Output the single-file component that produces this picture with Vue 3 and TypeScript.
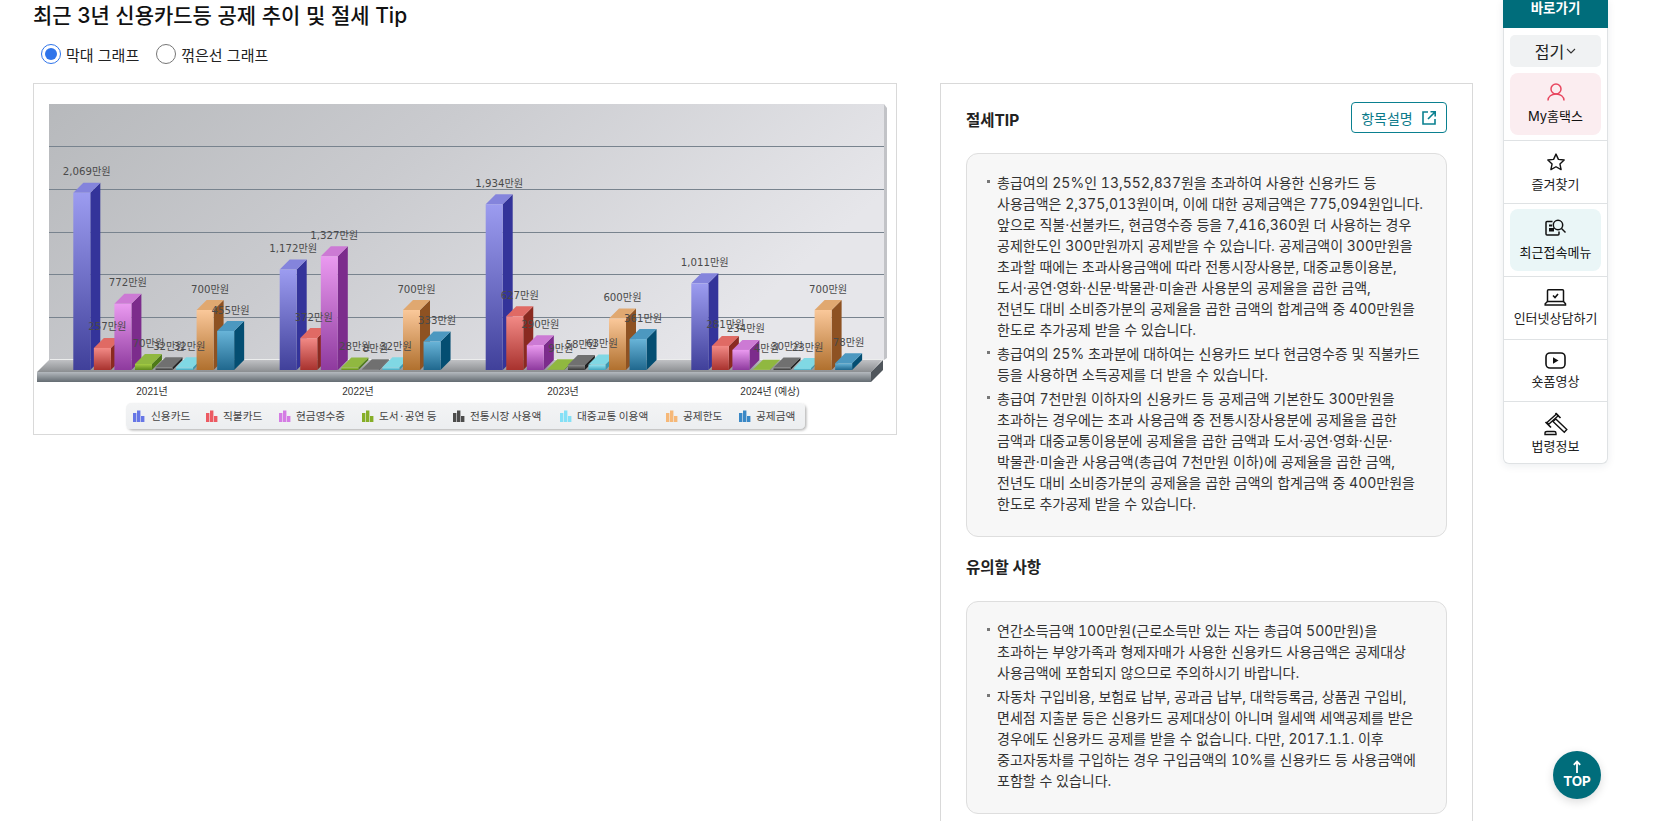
<script setup lang="ts">
import { ref } from 'vue'

interface Series { name: string; front: [string, string]; side: string; top: string; iconX: number; textX: number; icon: string }

const series: Series[] = [
  { name: '신용카드', front: ['#9c9cf0', '#40409a'], side: '#34349a', top: '#8484dc', iconX: 133, textX: 151, icon: '#6676e6' },
  { name: '직불카드', front: ['#f28a86', '#a8322e'], side: '#8a2a20', top: '#e06a64', iconX: 206, textX: 223, icon: '#ec5a62' },
  { name: '현금영수증', front: ['#ea9af0', '#8e3a9e'], side: '#7c2c8c', top: '#cc7ad4', iconX: 279, textX: 296, icon: '#d47ce4' },
  { name: '도서·공연 등', front: ['#a4cc44', '#5f8a1e'], side: '#4e7a18', top: '#90b840', iconX: 362, textX: 379, icon: '#86ae28' },
  { name: '전통시장 사용액', front: ['#8c8c8c', '#3a3a3a'], side: '#222222', top: '#707070', iconX: 453, textX: 470, icon: '#4c4c4c' },
  { name: '대중교통 이용액', front: ['#94e4f0', '#44a8c0'], side: '#3c98b0', top: '#80d8e4', iconX: 560, textX: 577, icon: '#84e0f6' },
  { name: '공제한도', front: ['#fac89a', '#b0702e'], side: '#8e5222', top: '#e0a870', iconX: 666, textX: 683, icon: '#f6b878' },
  { name: '공제금액', front: ['#68b4d8', '#20688e'], side: '#044e72', top: '#4c98c0', iconX: 739, textX: 756, icon: '#3a88c6' },
]

const years = [
  { label: '2021년', x: 73.3, labelX: 152, values: [2069, 257, 772, 70, 32, 32, 700, 455] },
  { label: '2022년', x: 279.7, labelX: 358, values: [1172, 372, 1327, 28, 8, 32, 700, 333] },
  { label: '2023년', x: 485.7, labelX: 563, values: [1934, 627, 290, 9, 58, 63, 600, 361] },
  { label: '2024년 (예상)', x: 691.3, labelX: 770, values: [1011, 281, 234, 4, 30, 23, 700, 78] },
]

const base = 370
const barW = 17
const depth = 10
const step = 20.55
const scale = 0.0857

const bars = years.flatMap((y, yi) =>
  y.values.map((v, si) => {
    const x = y.x + si * step
    const top = base - v * scale
    return {
      key: `${yi}-${si}`,
      x,
      top,
      h: v * scale,
      si,
      side: `${x + barW},${top} ${x + barW + depth},${top - depth} ${x + barW + depth},${base - depth} ${x + barW},${base}`,
      cap: `${x},${top} ${x + depth},${top - depth} ${x + barW + depth},${top - depth} ${x + barW},${top}`,
      labelX: x + barW / 2 + depth / 2,
      labelY: top - 17.5,
      label: `${v.toLocaleString('en-US')}만원`,
    }
  }),
)

const grid = [146, 189, 232, 274, 317]

const tips = [
  [
    '총급여의 25%인 13,552,837원을 초과하여 사용한 신용카드 등',
    '사용금액은 2,375,013원이며, 이에 대한 공제금액은 775,094원입니다.',
    '앞으로 직불·선불카드, 현금영수증 등을 7,416,360원 더 사용하는 경우',
    '공제한도인 300만원까지 공제받을 수 있습니다. 공제금액이 300만원을',
    '초과할 때에는 초과사용금액에 따라 전통시장사용분, 대중교통이용분,',
    '도서·공연·영화·신문·박물관·미술관 사용분의 공제율을 곱한 금액,',
    '전년도 대비 소비증가분의 공제율을 곱한 금액의 합계금액 중 400만원을',
    '한도로 추가공제 받을 수 있습니다.',
  ],
  [
    '총급여의 25% 초과분에 대하여는 신용카드 보다 현금영수증 및 직불카드',
    '등을 사용하면 소득공제를 더 받을 수 있습니다.',
  ],
  [
    '총급여 7천만원 이하자의 신용카드 등 공제금액 기본한도 300만원을',
    '초과하는 경우에는 초과 사용금액 중 전통시장사용분에 공제율을 곱한',
    '금액과 대중교통이용분에 공제율을 곱한 금액과 도서·공연·영화·신문·',
    '박물관·미술관 사용금액(총급여 7천만원 이하)에 공제율을 곱한 금액,',
    '전년도 대비 소비증가분의 공제율을 곱한 금액의 합계금액 중 400만원을',
    '한도로 추가공제 받을 수 있습니다.',
  ],
]

const notes = [
  [
    '연간소득금액 100만원(근로소득만 있는 자는 총급여 500만원)을',
    '초과하는 부양가족과 형제자매가 사용한 신용카드 사용금액은 공제대상',
    '사용금액에 포함되지 않으므로 주의하시기 바랍니다.',
  ],
  [
    '자동차 구입비용, 보험료 납부, 공과금 납부, 대학등록금, 상품권 구입비,',
    '면세점 지출분 등은 신용카드 공제대상이 아니며 월세액 세액공제를 받은',
    '경우에도 신용카드 공제를 받을 수 없습니다. 다만, 2017.1.1. 이후',
    '중고자동차를 구입하는 경우 구입금액의 10%를 신용카드 등 사용금액에',
    '포함할 수 있습니다.',
  ],
]

const graph = ref('bar')
</script>

<template>
  <div class="page">
    <main class="main">
      <h2 class="title">최근 3년 신용카드등 공제 추이 및 절세 Tip</h2>
      <div class="radios">
        <label class="radio">
          <input v-model="graph" type="radio" value="bar" />
          <span>막대 그래프</span>
        </label>
        <label class="radio">
          <input v-model="graph" type="radio" value="line" />
          <span>꺾은선 그래프</span>
        </label>
      </div>

      <div class="columns">
        <section class="chart-frame">
          <svg class="chart" viewBox="34 84 862 350" width="862" height="350" xmlns="http://www.w3.org/2000/svg">
            <defs>
              <linearGradient id="wall" x1="0" y1="0" x2="1" y2="0.35">
                <stop offset="0" stop-color="#b7b9bc" />
                <stop offset="0.45" stop-color="#cacbcf" />
                <stop offset="1" stop-color="#e6e6ea" />
              </linearGradient>
              <linearGradient id="floorTop" x1="0" y1="0" x2="0" y2="1">
                <stop offset="0" stop-color="#c4c5c8" />
                <stop offset="1" stop-color="#8b8e91" />
              </linearGradient>
              <linearGradient id="floorFront" x1="0" y1="0" x2="0" y2="1">
                <stop offset="0" stop-color="#b4b9be" />
                <stop offset="1" stop-color="#646c72" />
              </linearGradient>
              <linearGradient id="legendBg" x1="0" y1="0" x2="0" y2="1">
                <stop offset="0" stop-color="#f3f4f5" />
                <stop offset="1" stop-color="#eceef0" />
              </linearGradient>
              <filter id="legendShadow" x="-2%" y="-20%" width="104%" height="150%">
                <feDropShadow dx="1.5" dy="1.5" stdDeviation="1.2" flood-color="#000" flood-opacity="0.28" />
              </filter>
              <linearGradient v-for="(s, i) in series" :id="`front${i}`" :key="s.name" x1="0" y1="0" x2="0" y2="1">
                <stop offset="0" :stop-color="s.front[0]" />
                <stop offset="1" :stop-color="s.front[1]" />
              </linearGradient>
            </defs>

            <polygon points="884,104 887,108 887,358 884,360" fill="#c2c3c7" />
            <rect x="49" y="104" width="835" height="256" fill="url(#wall)" />
            <rect v-for="g in grid" :key="g" x="49" :y="g" width="835" height="1" fill="#78838e" />

            <polygon points="50,359 883,359 871,372 37,372" fill="url(#floorTop)" />
            <rect x="50" y="359" width="833" height="1" fill="#eceded" />
            <rect x="37" y="372" width="834" height="10" fill="url(#floorFront)" />
            <polygon points="871,372 883,360 883,370 871,382" fill="#50565c" />

            <g v-for="b in bars" :key="b.key">
              <polygon :points="b.side" :fill="series[b.si].side" />
              <polygon :points="b.cap" :fill="series[b.si].top" />
              <rect :x="b.x" :y="b.top" :width="barW" :height="b.h" :fill="`url(#front${b.si})`" />
            </g>

            <text v-for="b in bars" :key="`t${b.key}`" class="value" :x="b.labelX" :y="b.labelY" text-anchor="middle">{{ b.label }}</text>
            <text v-for="y in years" :key="y.label" class="year" :x="y.labelX" y="395" text-anchor="middle">{{ y.label }}</text>

            <rect x="126" y="403" width="679" height="26" rx="5" fill="url(#legendBg)" filter="url(#legendShadow)" />
            <g v-for="(s, i) in series" :key="`l${i}`">
              <rect :x="s.iconX" y="413" width="3.400" height="9" :fill="s.icon" />
              <rect :x="s.iconX + 4" y="410.500" width="3.400" height="11.500" :fill="s.icon" />
              <rect :x="s.iconX + 8" y="416" width="3.400" height="6" :fill="s.icon" />
              <text class="legend" :x="s.textX" y="420">{{ s.name }}</text>
            </g>
          </svg>
        </section>

        <aside class="panel">
          <div class="panel-head">
            <h3 class="panel-title head-title">절세TIP</h3>
            <button class="explain" type="button">
              항목설명
              <svg width="16" height="16" viewBox="0 0 16 16" fill="none" stroke="#0a8090" stroke-width="1.6">
                <path d="M7 2H2v12h12V9" />
                <path d="M9.5 1.8h4.7v4.7M14 2L7 9" />
              </svg>
            </button>
          </div>
          <div class="tip-box first">
            <div v-for="(item, i) in tips" :key="i" class="tip">
              <span v-for="line in item" :key="line" class="line">{{ line }}</span>
            </div>
          </div>
          <h3 class="panel-title notes-title">유의할 사항</h3>
          <div class="tip-box">
            <div v-for="(item, i) in notes" :key="i" class="tip">
              <span v-for="line in item" :key="line" class="line">{{ line }}</span>
            </div>
          </div>
        </aside>
      </div>
    </main>

    <nav class="quick">
      <div class="quick-head">바로가기</div>
      <div class="fold-wrap">
        <button class="fold" type="button">
          접기
          <svg width="10" height="6" viewBox="0 0 10 6" fill="none" stroke="#333" stroke-width="1.1"><path d="M1 1l4 4 4-4" /></svg>
        </button>
      </div>
      <div class="q-pad">
        <a class="q-item pink">
          <svg width="18" height="18" viewBox="0 0 18 18" fill="none" stroke="#e8475f" stroke-width="1.5">
            <circle cx="9" cy="6" r="5" />
            <path d="M1 17.5c0-4 3.5-6.500 8-6.500s8 2.500 8 6.500" />
          </svg>
          <span>My홈택스</span>
        </a>
      </div>
      <a class="q-row">
        <svg width="20" height="20" viewBox="0 0 24 24" fill="none" stroke="#111" stroke-width="1.7" stroke-linejoin="round">
          <path d="M12 2.500l2.900 6.300 6.900.8-5.100 4.700 1.400 6.800L12 17.700l-6.100 3.400 1.400-6.800L2.200 9.600l6.900-.8z" />
        </svg>
        <span>즐겨찾기</span>
      </a>
      <div class="q-pad">
        <a class="q-item mint">
          <svg width="21" height="18" viewBox="0 0 21 18" fill="none" stroke="#111" stroke-width="1.5">
            <path d="M7.500 2.500H2a1 1 0 0 0-1 1V15a1 1 0 0 0 1 1h11a1 1 0 0 0 1-1v-2.500" />
            <rect x="4" y="9" width="5" height="3.500" fill="#111" stroke="none" />
            <rect x="4" y="5.500" width="3" height="2" fill="#111" stroke="none" />
            <circle cx="13" cy="6" r="4.700" />
            <path d="M16.500 9.500l4 4" />
          </svg>
          <span>최근접속메뉴</span>
        </a>
      </div>
      <a class="q-row">
        <svg width="23" height="17" viewBox="0 0 23 17" fill="none" stroke="#111" stroke-width="1.5">
          <path d="M3.500 12.500V1.800a1 1 0 0 1 1-1h14a1 1 0 0 1 1 1v10.700" />
          <path d="M3.500 12.500h16l2 2.200v1.200H1.200v-1.200z" />
          <path d="M9 6.500l2 2 3-3.500" stroke-width="1.600" />
        </svg>
        <span>인터넷상담하기</span>
      </a>
      <a class="q-row">
        <svg width="21" height="17" viewBox="0 0 21 17" fill="none" stroke="#111" stroke-width="1.600">
          <rect x="1" y="1" width="19" height="15" rx="4" />
          <path d="M8 5.200l5.500 3.300L8 11.800z" fill="#111" stroke="none" />
        </svg>
        <span>숏폼영상</span>
      </a>
      <a class="q-row last">
        <svg width="26" height="24" viewBox="0 0 26 24" fill="none" stroke="#111" stroke-width="1.400">
          <path d="M4 10.500L13.500 2l1.700 1.700-9.500 8.500z" />
          <path d="M2.500 10l5.500 5.500M12.500 1l5 5" stroke-width="1.700" />
          <path d="M10 9.500l2.800-2.500 11 10.500-2.500 2.700z" />
          <path d="M2 22.500h11v-1.300c0-1-.8-1.700-1.800-1.700H4c-1 0-2 .7-2 1.700z" />
        </svg>
        <span>법령정보</span>
      </a>
    </nav>

    <button class="top" type="button">
      <svg width="10" height="13" viewBox="0 0 10 13" fill="none" stroke="#fff" stroke-width="1.800"><path d="M5 13V2M1.800 4.800L5 1.500l3.200 3.300" /></svg>
      <span>TOP</span>
    </button>
  </div>
</template>

<style>
html, body { margin: 0; overflow: hidden; background: #fff; }
</style>

<style scoped>
.page {
  position: relative;
  width: 1660px;
  height: 821px;
  overflow: hidden;
  background: #fff;
  color: #222;
  font-family: Inter, "Noto Sans CJK KR", sans-serif;
}
.main { padding-left: 33px; }
.title {
  margin: 0;
  padding-top: 1px;
  font-size: 21px;
  line-height: 30px;
  font-weight: 500;
  color: #111;
  height: 31px;
}
.radios {
  display: flex;
  gap: 17px;
  margin: 11px 0 0 8px;
  height: 22px;
  align-items: center;
}
.radio { display: flex; align-items: center; gap: 5px; font-size: 15px; color: #222; }
.radio input { width: 20px; height: 20px; margin: 0; accent-color: #2f74ea; }
.columns { display: flex; align-items: flex-start; gap: 43px; margin-top: 18px; }
.chart-frame { width: 864px; height: 352px; box-sizing: border-box; border: 1px solid #d9d9d9; flex: none; }
.chart { display: block; }
.value { font: 10.200px "DejaVu Sans", "Noto Sans CJK KR", sans-serif; fill: #4a4a4a; }
.year { font: 10px "Liberation Sans", "Noto Sans CJK KR", sans-serif; fill: #333; }
.legend { font: 10.700px "Noto Sans CJK KR", sans-serif; fill: #444; }

.panel {
  width: 533px;
  box-sizing: border-box;
  flex: none;
  border: 1px solid #d9d9d9;
  padding: 18px 25px 40px;
}
.panel-head { display: flex; justify-content: space-between; align-items: center; height: 31px; margin-bottom: 20px; }
.panel-title { margin: 0; font-size: 15.500px; line-height: 30px; font-weight: 700; color: #222; }
.head-title { position: relative; top: 3px; }
.notes-title { margin: 16px 0 18px; }
.explain {
  width: 96px;
  height: 31px;
  box-sizing: border-box;
  display: flex;
  align-items: center;
  justify-content: center;
  gap: 8px;
  padding: 0;
  border: 1px solid #0a8090;
  border-radius: 4px;
  background: #fff;
  color: #0a7a8a;
  font: 14px Inter, "Noto Sans CJK KR", sans-serif;
}
.tip-box {
  border: 1px solid #dedede;
  border-radius: 12px;
  background: #f7f7f7;
  padding: 18px 20px 22px 30px;
}
.tip {
  position: relative;
  margin-bottom: 3px;
  font-size: 14px;
  line-height: 21px;
  color: #333;
  font-variant-numeric: tabular-nums;
}
.tip:last-child { margin-bottom: 0; }
.tip::before {
  content: "";
  position: absolute;
  left: -10px;
  top: 8px;
  width: 3px;
  height: 3px;
  background: #777;
}
.line { display: block; white-space: nowrap; }

.quick {
  position: absolute;
  left: 1503px;
  top: 0;
  width: 105px;
  height: 464px;
  box-sizing: border-box;
  border: 1px solid #dfe2e4;
  border-top: 0;
  border-radius: 0 0 6px 6px;
  background: #fff;
  box-shadow: 0 2px 8px rgba(0, 40, 60, 0.08);
  font-size: 13px;
  color: #222;
}
.quick-head {
  height: 28px;
  margin: 0 -1px;
  background: #006d7b;
  color: #fff;
  font-size: 13.500px;
  font-weight: 700;
  line-height: 16px;
  text-align: center;
}
.fold-wrap { padding: 7px 6px 6px; }
.fold {
  width: 100%;
  height: 32px;
  display: flex;
  align-items: center;
  justify-content: center;
  gap: 2px;
  padding: 0;
  border: 0;
  border-radius: 5px;
  background: #f0f2f3;
  color: #222;
  font: 16px Inter, "Noto Sans CJK KR", sans-serif;
}
.q-pad { padding: 0 6px 5px; border-bottom: 1px solid #dfe2e4; }
.q-pad + .q-row { height: 63px; }
.q-item {
  height: 62px;
  display: flex;
  flex-direction: column;
  align-items: center;
  justify-content: center;
  gap: 5px;
  border-radius: 8px;
  font-weight: 400;
}
.pink { background: #fbedf0; color: #111; }
.mint { background: #eaf6f7; color: #111; }
.q-row {
  height: 62px;
  box-sizing: border-box;
  display: flex;
  flex-direction: column;
  align-items: center;
  justify-content: center;
  gap: 2px;
  border-bottom: 1px solid #dfe2e4;
  font-weight: 400;
}
.q-row.last { border-bottom: 0; gap: 0; }
.q-row + .q-pad { padding-top: 5px; }

.top {
  position: absolute;
  left: 1553px;
  top: 751px;
  width: 48px;
  height: 48px;
  padding: 0;
  border: 0;
  border-radius: 50%;
  background: #006d7b;
  color: #fff;
  display: flex;
  flex-direction: column;
  align-items: center;
  justify-content: center;
  gap: 0;
  box-shadow: 0 3px 10px rgba(0, 0, 0, 0.14);
  font: 700 13.500px/17px Inter, sans-serif;
}
</style>
